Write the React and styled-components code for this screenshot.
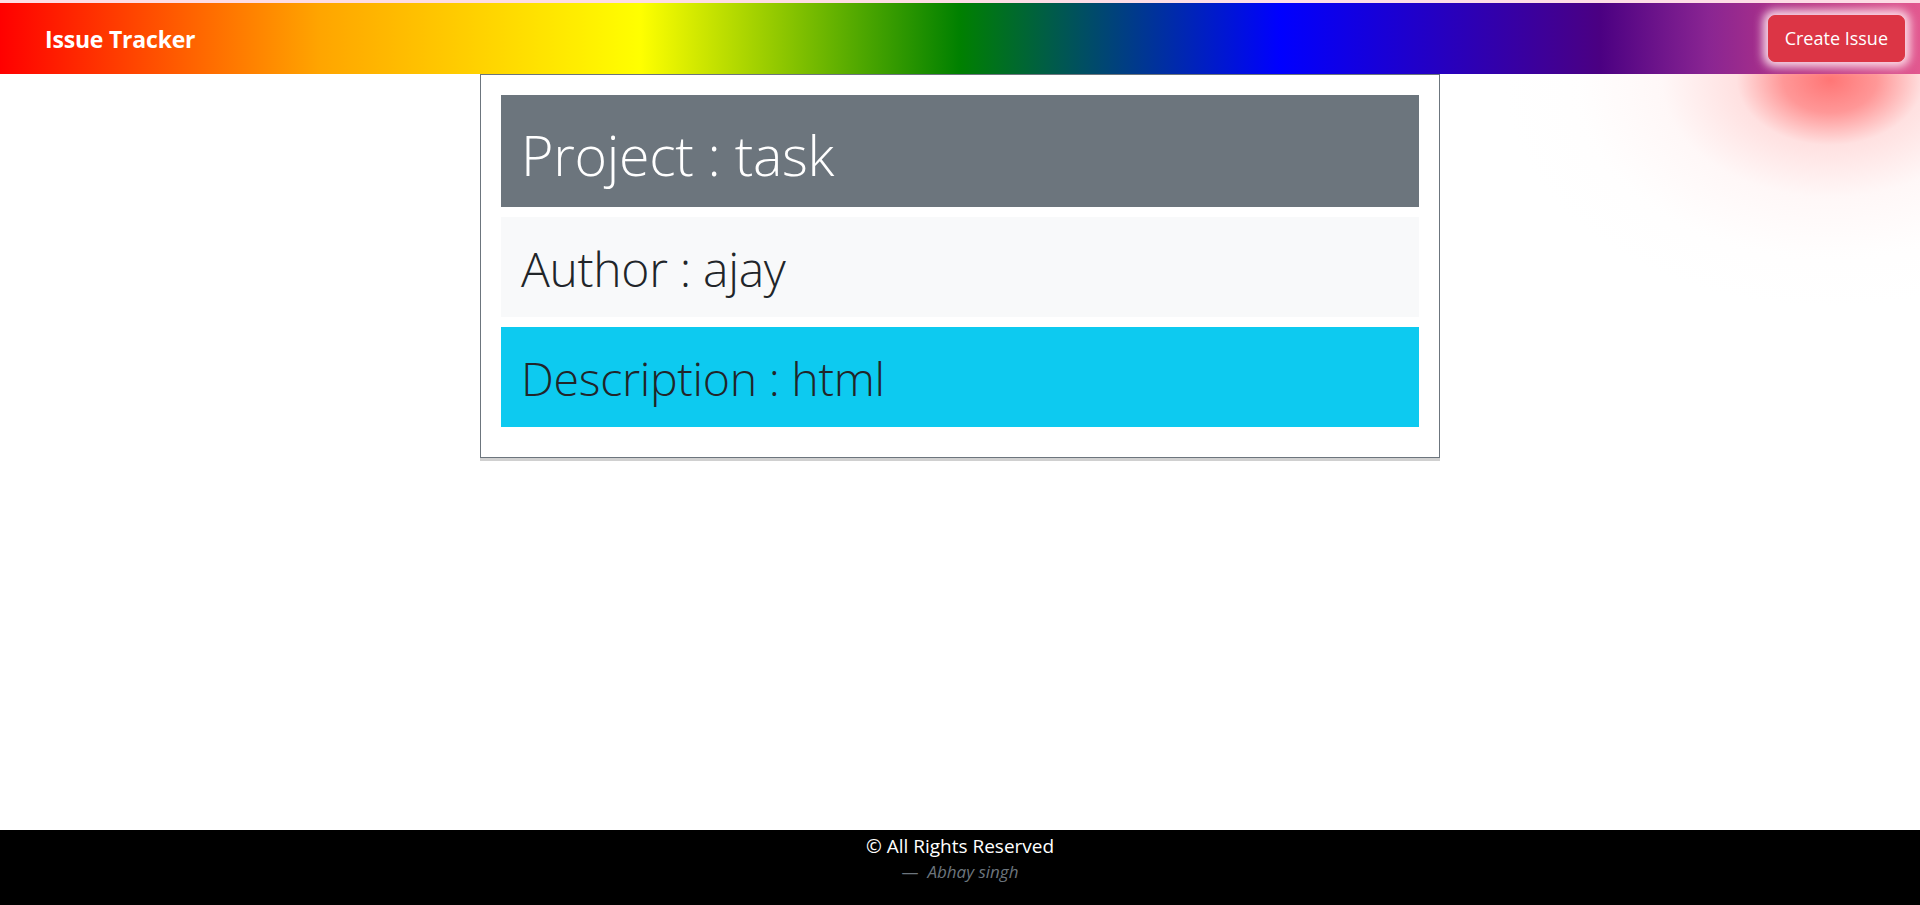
import React from 'react';
import styled, { createGlobalStyle } from 'styled-components';

const GlobalStyle = createGlobalStyle`
  * {
    box-sizing: border-box;
  }
  body {
    margin: 0;
    font-family: 'Open Sans', 'Liberation Sans', sans-serif;
    color: #212529;
    background: #fff;
  }
`;

const Page = styled.div`
  min-height: 100vh;
  display: flex;
  flex-direction: column;
  position: relative;
  overflow: hidden;
`;

const Navbar = styled.nav`
  position: relative;
  z-index: 2;
  height: 74px;
  border-top: 3px solid #fddde6;
  background: linear-gradient(
    to right,
    red 0%,
    orange 16.67%,
    yellow 33.33%,
    green 50%,
    blue 66.67%,
    indigo 83.33%,
    #8a2592 89%,
    #b83585 94%,
    #e2588f 100%
  );
  display: flex;
  align-items: center;
  justify-content: space-between;
  padding: 0 15px 0 45px;
`;

const Brand = styled.span`
  color: #fff;
  font-weight: 700;
  font-size: 23px;
  letter-spacing: -0.2px;
`;

const CreateButton = styled.button`
  background: #dc3545;
  color: #fff;
  border: 1px solid #dc3545;
  border-radius: 7px;
  font-family: inherit;
  font-size: 18px;
  line-height: 27px;
  padding: 9px 16px;
  box-shadow: 0 0 10px 5px rgba(255, 232, 238, 0.92);
  cursor: pointer;
`;

const Glow = styled.div`
  position: absolute;
  z-index: 1;
  top: -150px;
  right: -240px;
  width: 660px;
  height: 460px;
  pointer-events: none;
  background: radial-gradient(
    ellipse at center,
    rgba(255, 110, 110, 0.95) 0%,
    rgba(255, 125, 125, 0.8) 10%,
    rgba(255, 180, 180, 0.4) 20%,
    rgba(255, 210, 210, 0.17) 36%,
    rgba(255, 235, 235, 0.06) 54%,
    rgba(255, 255, 255, 0) 70%
  );
`;

const Main = styled.main`
  flex: 1;
  position: relative;
  z-index: 1;
  display: flex;
  justify-content: center;
  align-items: flex-start;
`;

const Card = styled.div`
  width: 960px;
  border: 1px solid #6c757d;
  background: #fff;
  padding: 20px;
  box-shadow: 0 3px 0 #d0d0d0;
`;

const Row = styled.div`
  background: ${p => p.bg};
  color: ${p => p.fg};
  height: ${p => p.h}px;
  margin-bottom: 10px;
  padding: ${p => p.shift}px 20px 0;
  display: flex;
  align-items: center;
  font-weight: 300;
  font-size: ${p => p.size}px;
  line-height: 1.2;
  letter-spacing: -0.3px;
`;

const Footer = styled.footer`
  background: #000;
  height: 75px;
  display: flex;
  flex-direction: column;
  align-items: center;
  padding-top: 3px;
`;

const Rights = styled.div`
  color: #fff;
  font-size: 19px;
  line-height: 26px;
`;

const Signature = styled.div`
  color: #6c757d;
  font-size: 17px;
  font-style: italic;
  line-height: 25px;

  &::before {
    content: '\\2014\\00A0\\00A0';
    font-style: normal;
  }
`;

export default function App() {
  return (
    <Page>
      <GlobalStyle />
      <Navbar>
        <Brand>Issue Tracker</Brand>
        <CreateButton>Create Issue</CreateButton>
      </Navbar>
      <Glow />
      <Main>
        <Card>
          <Row bg="#6c757d" fg="#fff" h={112} size={55.5} shift={8}>Project : task</Row>
          <Row bg="#f8f9fa" fg="#212529" h={100} size={48} shift={4}>Author : ajay</Row>
          <Row bg="#0dcaf0" fg="#212529" h={100} size={46.5} shift={4}>Description : html</Row>
        </Card>
      </Main>
      <Footer>
        <Rights>© All Rights Reserved</Rights>
        <Signature>Abhay singh</Signature>
      </Footer>
    </Page>
  );
}
